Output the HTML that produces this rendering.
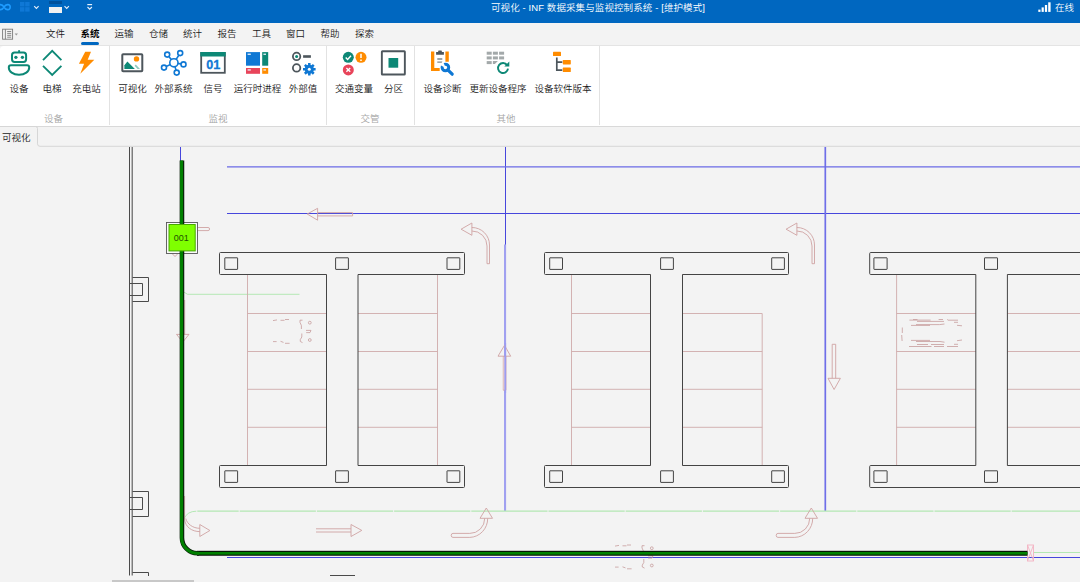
<!DOCTYPE html>
<html lang="zh-CN">
<head>
<meta charset="utf-8">
<title>可视化 - INF 数据采集与监视控制系统</title>
<style>
html,body{margin:0;padding:0;}
body{width:1080px;height:582px;overflow:hidden;background:#f3f3f3;position:relative;
 font-family:"Liberation Sans","Noto Sans CJK SC",sans-serif;font-size:9.5px;color:#222;font-weight:350;}
.abs{position:absolute;}
#title{left:0;top:0;width:1080px;height:23px;background:#0067c0;color:#fff;}
#title .t{letter-spacing:0.1px;position:absolute;left:0;width:1196px;text-align:center;top:1px;line-height:13px;font-size:9.5px;white-space:nowrap;}
#online{position:absolute;left:1055px;top:1px;line-height:13px;font-size:9.5px;color:#fff;}
#menu{left:0;top:23px;width:1080px;height:22px;background:#f3f3f3;}
.mi{position:absolute;top:27.4px;width:40px;margin-left:-20px;text-align:center;line-height:14px;font-size:9.5px;color:#1a1a1a;white-space:nowrap;}
.mi.on{font-weight:bold;color:#000;}
#ul{left:81px;top:42.2px;width:18px;height:2.8px;border-radius:1.5px;background:#0067c0;}
#ribbon{left:0;top:46px;width:1080px;height:80px;background:#fff;border-top-left-radius:4px;}
#ribtop{left:0;top:45px;width:1080px;height:1px;background:#e4e4e4;}
#ribbot{left:0;top:125.5px;width:1080px;height:1px;background:#d9d9d9;}
.sep{position:absolute;top:46px;width:1px;height:79px;background:#e2e2e2;}
.lb{position:absolute;top:82px;width:80px;margin-left:-40px;text-align:center;line-height:14px;font-size:9.5px;color:#1a1a1a;white-space:nowrap;}
.gl{position:absolute;top:112px;width:60px;margin-left:-30px;text-align:center;line-height:14px;font-size:9.5px;color:#a6a6a6;white-space:nowrap;}
#tabtxt{left:2px;top:130.5px;line-height:14px;font-size:9.5px;color:#1a1a1a;white-space:nowrap;}
svg{position:absolute;left:0;top:0;}
</style>
</head>
<body>
<div id="title" class="abs"><div class="t">可视化 - INF 数据采集与监视控制系统 - [维护模式]</div><div id="online">在线</div></div>
<div id="menu" class="abs"></div>
<div class="mi on" style="left:90px">系统</div>
<div class="mi" style="left:55.5px">文件</div>
<div class="mi" style="left:124px">运输</div>
<div class="mi" style="left:158.5px">仓储</div>
<div class="mi" style="left:192.5px">统计</div>
<div class="mi" style="left:227px">报告</div>
<div class="mi" style="left:261.5px">工具</div>
<div class="mi" style="left:295.5px">窗口</div>
<div class="mi" style="left:330px">帮助</div>
<div class="mi" style="left:364.5px">探索</div>
<div id="ribtop" class="abs"></div>
<div id="ribbon" class="abs"></div>
<div id="ribbot" class="abs"></div>
<div id="ul" class="abs"></div>
<div class="sep" style="left:109px"></div>
<div class="sep" style="left:326px"></div>
<div class="sep" style="left:414px"></div>
<div class="sep" style="left:599px"></div>

<div class="lb" style="left:19px">设备</div>
<div class="lb" style="left:52px">电梯</div>
<div class="lb" style="left:86.5px">充电站</div>
<div class="lb" style="left:132.5px">可视化</div>
<div class="lb" style="left:173.5px">外部系统</div>
<div class="lb" style="left:213px">信号</div>
<div class="lb" style="left:257.5px">运行时进程</div>
<div class="lb" style="left:303px">外部值</div>
<div class="lb" style="left:354px">交通变量</div>
<div class="lb" style="left:393.5px">分区</div>
<div class="lb" style="left:442.5px">设备诊断</div>
<div class="lb" style="left:498px">更新设备程序</div>
<div class="lb" style="left:563px">设备软件版本</div>

<div class="gl" style="left:53.5px">设备</div>
<div class="gl" style="left:218px">监视</div>
<div class="gl" style="left:370px">交管</div>
<div class="gl" style="left:506px">其他</div>

<div id="tabtxt" class="abs">可视化</div>

<svg id="icons" width="1080" height="130" viewBox="0 0 1080 130">
<!-- title bar -->
<path d="M4 7.1c1.6-2.9 6.2-3.8 6.2 0s-4.6 2.9-6.2 0s-6.2-3.8-6.2 0s4.6 2.9 6.2 0z" fill="none" stroke="#1e9cff" stroke-width="1.6"/>
<g fill="#0f78d6"><rect x="20" y="2" width="4.4" height="4.4"/><rect x="25.2" y="2" width="4.4" height="4.4"/><rect x="20" y="7.2" width="4.4" height="4.4"/><rect x="25.2" y="7.2" width="4.4" height="4.4"/></g>
<g fill="none" stroke="#e4effa" stroke-width="1.15"><path d="M34.2 6.2l2.2 2.2l2.2-2.2"/><path d="M64.5 6.2l2.2 2.2l2.2-2.2"/><path d="M87.5 7l2.2 2.2l2.2-2.2"/><path d="M87.3 4.6h4.8" stroke-width="1.2"/></g>
<rect x="49" y="1" width="13" height="3" fill="#00519c"/>
<rect x="49" y="7" width="13" height="6" fill="#f1f1f1"/>
<g fill="#fff"><rect x="1038.3" y="9.6" width="2.2" height="2.3"/><rect x="1041.6" y="7.4" width="2.2" height="4.5"/><rect x="1044.9" y="5" width="2.2" height="6.9"/><rect x="1048.2" y="2.3" width="2.4" height="9.6"/></g>
<!-- menu sidebar icon -->
<g fill="none" stroke="#7a7a7a" stroke-width="0.9"><rect x="2.6" y="29.2" width="10" height="10"/><path d="M5.4 29.2v10M7.2 31.5h4M7.2 33.4h4M7.2 35.3h4M7.2 37.2h4"/></g>
<path d="M14.6 33.6l1.7 1.8l1.7-1.8z" fill="#9a9a9a"/>
<!-- robot -->
<g fill="none" stroke="#0d8876" stroke-width="2" stroke-linejoin="round"><rect x="12" y="52.6" width="14.1" height="9.3" rx="2.6"/><path d="M19.1 50.2v2.4" stroke-width="1.9"/><path d="M11 65.2H27Q29.2 65.2 29.2 67.4C29.2 71.5 25 74.7 19 74.7S8.8 71.5 8.8 67.4Q8.8 65.2 11 65.2Z"/></g>
<circle cx="15.9" cy="57.3" r="1.65" fill="#0d8876"/><circle cx="22.4" cy="57.3" r="1.65" fill="#0d8876"/>
<!-- elevator -->
<g fill="none" stroke="#0d8876" stroke-width="1.85"><path d="M43 60.1l9.2-9.3l9.2 9.3"/><path d="M43 65.8l9.2 9.2l9.2-9.2"/></g>
<!-- lightning -->
<path d="M85.2 51.8h5.8l-3.3 7.9h6.6l-14 14l3.8-10h-5.2z" fill="#ff8c00"/>
<!-- image -->
<rect x="122.3" y="54.3" width="20" height="17" rx="0.8" fill="#fff" stroke="#4d565c" stroke-width="2"/>
<circle cx="136.5" cy="58.9" r="2.7" fill="#ff8c00"/>
<path d="M124.4 69v-3.8l3-3.6l7.5 7.4z" fill="#0d8876"/><path d="M134.6 65.7l1.2-1.1l4.2 4.4h-2.5z" fill="#8fcabf"/>
<!-- network -->
<g fill="#fff" stroke="#0f78d4" stroke-width="1.6"><path d="M173.9 62.8L167.2 54.6M173.9 62.8L180.2 53.1M173.9 62.8L183.5 64.4M173.9 62.8L176.7 72.6M173.9 62.8L164 67.6"/><circle cx="173.9" cy="62.8" r="4.1"/><circle cx="167.2" cy="54.6" r="2.5"/><circle cx="180.2" cy="53.1" r="2.5"/><circle cx="183.5" cy="64.4" r="2.5"/><circle cx="176.7" cy="72.6" r="2.5"/><circle cx="164" cy="67.6" r="2.5"/></g>
<!-- 01 -->
<rect x="201.2" y="53" width="23.6" height="19.8" fill="#fff" stroke="#4d565c" stroke-width="1.8"/>
<rect x="200.3" y="52" width="25.4" height="4.5" fill="#0d8876"/>
<text x="213.3" y="69.1" text-anchor="middle" style="font:bold 12.6px 'Liberation Sans',sans-serif" fill="#0f78d4" stroke="#0f78d4" stroke-width="0.3">01</text>
<!-- tiles -->
<rect x="246" y="52.1" width="14" height="13.6" fill="#0f78d4"/><rect x="262.2" y="52.1" width="6" height="13.6" fill="#0d8876"/>
<rect x="246" y="68" width="14" height="5.8" fill="#e8445a"/><rect x="262.2" y="68" width="6" height="5.8" fill="#ff8c00"/>
<g fill="#e8f1fb"><rect x="247.6" y="53.6" width="3.2" height="1.3"/><rect x="263.4" y="53.6" width="2.6" height="1.3"/><rect x="247.6" y="69.3" width="3.2" height="1.3"/><rect x="263.4" y="69.3" width="2.6" height="1.3"/></g>
<!-- options gear -->
<g fill="#fff" stroke="#4d565c" stroke-width="1.8"><circle cx="296.6" cy="56.4" r="3.7"/><circle cx="296.6" cy="67.9" r="3.7"/></g>
<circle cx="296.6" cy="56.4" r="1.5" fill="#0d8876"/>
<rect x="303.1" y="55.2" width="7.8" height="2.6" fill="#4d565c"/>
<g fill="#0f78d4"><circle cx="309.3" cy="69.3" r="4.6"/><g stroke="#0f78d4" stroke-width="2.5"><path d="M309.3 63v12.6M303 69.3h12.6M304.85 64.85l8.9 8.9M313.75 64.85l-8.9 8.9"/></g></g>
<circle cx="309.3" cy="69.3" r="1.5" fill="#fff"/>
<!-- traffic vars -->
<circle cx="348.3" cy="57.3" r="5.5" fill="#0d8876"/><path d="M345.7 57.5l1.9 1.9l3.4-3.6" fill="none" stroke="#fff" stroke-width="1.4"/>
<circle cx="361" cy="57.3" r="5.5" fill="#ff8c00"/><path d="M361 53.8v4.3M361 59.5v1.5" stroke="#fff" stroke-width="1.5"/>
<circle cx="348.3" cy="69.9" r="5.5" fill="#e8445a"/><path d="M346.4 68l3.8 3.8M350.2 68l-3.8 3.8" stroke="#fff" stroke-width="1.4"/>
<!-- zone -->
<rect x="381.85" y="51.25" width="23" height="23.3" rx="0.6" fill="#fff" stroke="#4d565c" stroke-width="1.9"/><rect x="388.5" y="58" width="9.7" height="9.7" fill="#0d8876"/>
<!-- diagnosis -->
<path d="M431 51.6h3.3v16.3h5.4v3h-8.7zM445.4 51.6h3.4v10.2h-3.4z" fill="#ff8c00"/>
<path d="M436.1 54.7v-2.6h1.9l.500000-1.7h3l.500000 1.7h1.9v2.6z" fill="#4d565c"/>
<path d="M437.3 59h5M437.3 62.1h5" stroke="#7d868b" stroke-width="1.4"/>
<circle cx="445.4" cy="67.5" r="3.3" fill="none" stroke="#0f78d4" stroke-width="3"/>
<path d="M447.8 69.9l4.4 4.3" stroke="#0f78d4" stroke-width="3.2" stroke-linecap="round"/>
<path d="M445.8 67.9L439.6 64.8L443 61.4z" fill="#fff"/>
<!-- update -->
<g fill="#a3a9aa"><rect x="486.7" y="51.7" width="5" height="3"/><rect x="492.9" y="51.7" width="5" height="3"/><rect x="499.1" y="51.7" width="5" height="3"/><rect x="486.7" y="56.4" width="5" height="3"/><rect x="492.9" y="56.4" width="5" height="3"/><rect x="499.1" y="56.4" width="5" height="3"/><rect x="486.7" y="61.1" width="5" height="3"/><path d="M492.9 61.1h5l-3 3h-2z"/></g>
<path d="M507.1 65.1a5 5 0 1 0 .900000 3.6" fill="none" stroke="#0d8876" stroke-width="1.9"/><path d="M509.3 61.4v5h-5z" fill="#0d8876"/>
<!-- version -->
<g fill="#ff8c00"><rect x="553" y="51.7" width="8" height="4.4" rx=".6"/><rect x="562.8" y="60" width="8" height="4.4" rx=".6"/><rect x="562.8" y="67.6" width="8" height="4.4" rx=".6"/></g>
<path d="M556.8 57.6v12.6h5.5M556.8 62.2h5.5" fill="none" stroke="#4d565c" stroke-width="1.7"/>
</svg>
<svg id="cv" width="1080" height="582" viewBox="0 0 1080 582">
<path d="M0 126.5H35.5Q37.5 126.5 37.5 128.5V143.8Q37.5 146.3 40 146.3H1080" fill="none" stroke="#d6d6d6" stroke-width="1"/>
<g fill="none" stroke-width="1">
<g stroke="#4a4a4a"><path d="M129.5 147V575.5"/><path d="M132.2 147V575.5" stroke="#5a5a5a" stroke-width="1.15"/>
<path d="M132.5 277.5H148.5V301.5H132.5M129.5 283.5H142.5V295.5H129.5"/>
<path d="M132.5 491.5H148.5V516.5H132.5M129.5 497.5H142.5V509.5H129.5"/>
<path d="M132.5 572.5H148.5V576M330 575.5H355"/></g>
<g stroke="#4646dc"><path d="M180.5 147V162M227 213.5H1080M227 557.5H1080M505.5 147V245"/>
<path d="M825.3 147V511" stroke="#6e6ee8" stroke-width="1.7"/>
<path d="M227 166.8H1080" stroke="#6a6ae6" stroke-width="1.35"/>
<path d="M505.05 244.5V511" stroke="#a0a0f0" stroke-width="2.1"/></g>
<g stroke="#b4e8b4"><path d="M183.5 291.8L187.5 294.3H299.5"/>
<path d="M184 518.6Q187.5 511.2 196.3 511.2" /><path d="M197.3 511.2H1080" stroke-width="1.3" stroke-dasharray="76.2 1" stroke-dashoffset="34.8"/>
<path d="M1033.5 552.5H1080"/></g>
</g>
<path fill="none" stroke="#cfaaaa" stroke-width="0.9" d="M247.5 274.5V465.5M437.5 274.5V465.5M247.5 274.5H326.5M358 274.5H437.5M247.5 313.5H326.5M358 313.5H437.5M247.5 351.5H326.5M358 351.5H437.5M247.5 389.3H326.5M358 389.3H437.5M247.5 427.3H326.5M358 427.3H437.5M247.5 465.5H326.5M358 465.5H437.5"/>
<g fill="none" stroke="#444" stroke-width="1"><path d="M219.5 253.5Q219.5 252.5 220.5 252.5H463.5Q464.5 252.5 464.5 253.5V273.5Q464.5 274.5 463.5 274.5H358V465.5H463.5Q464.5 465.5 464.5 466.5V486.5Q464.5 487.5 463.5 487.5H220.5Q219.5 487.5 219.5 486.5V466.5Q219.5 465.5 220.5 465.5H326.5V274.5H220.5Q219.5 274.5 219.5 273.5Z"/>
<rect x="224.8" y="257.8" width="12.8" height="11.6" rx="0.3"/>
<rect x="224.8" y="470.8" width="12.8" height="11.6" rx="0.3"/>
<rect x="335.6" y="257.8" width="12.8" height="11.6" rx="0.3"/>
<rect x="335.6" y="470.8" width="12.8" height="11.6" rx="0.3"/>
<rect x="447" y="257.8" width="12.8" height="11.6" rx="0.3"/>
<rect x="447" y="470.8" width="12.8" height="11.6" rx="0.3"/>
</g>
<path fill="none" stroke="#cfaaaa" stroke-width="0.9" d="M571.5 274.5V465.5M762.2 313.5V465.5M571.5 274.5H650.5M682.5 274.5H762.2M571.5 313.5H650.5M682.5 313.5H762.2M571.5 351.5H650.5M682.5 351.5H762.2M571.5 389.3H650.5M682.5 389.3H762.2M571.5 427.3H650.5M682.5 427.3H762.2M571.5 465.5H650.5M682.5 465.5H762.2"/>
<g fill="none" stroke="#444" stroke-width="1"><path d="M544.5 253.5Q544.5 252.5 545.5 252.5H787.5Q788.5 252.5 788.5 253.5V273.5Q788.5 274.5 787.5 274.5H682.5V465.5H787.5Q788.5 465.5 788.5 466.5V486.5Q788.5 487.5 787.5 487.5H545.5Q544.5 487.5 544.5 486.5V466.5Q544.5 465.5 545.5 465.5H650.5V274.5H545.5Q544.5 274.5 544.5 273.5Z"/>
<rect x="549.7" y="257.8" width="12.8" height="11.6" rx="0.3"/>
<rect x="549.7" y="470.8" width="12.8" height="11.6" rx="0.3"/>
<rect x="660.6" y="257.8" width="12.8" height="11.6" rx="0.3"/>
<rect x="660.6" y="470.8" width="12.8" height="11.6" rx="0.3"/>
<rect x="771.7" y="257.8" width="12.7" height="11.6" rx="0.3"/>
<rect x="771.7" y="470.8" width="12.7" height="11.6" rx="0.3"/>
</g>
<path fill="none" stroke="#cfaaaa" stroke-width="0.9" d="M896.6 274.5V465.5M1087 274.5V465.5M896.6 274.5H975.8M1007.4 274.5H1087M896.6 313.5H975.8M1007.4 313.5H1087M896.6 351.5H975.8M1007.4 351.5H1087M896.6 389.3H975.8M1007.4 389.3H1087M896.6 427.3H975.8M1007.4 427.3H1087M896.6 465.5H975.8M1007.4 465.5H1087"/>
<g fill="none" stroke="#444" stroke-width="1"><path d="M869.7 253.5Q869.7 252.5 870.7 252.5H1113Q1114 252.5 1114 253.5V273.5Q1114 274.5 1113 274.5H1007.4V465.5H1113Q1114 465.5 1114 466.5V486.5Q1114 487.5 1113 487.5H870.7Q869.7 487.5 869.7 486.5V466.5Q869.7 465.5 870.7 465.5H975.8V274.5H870.7Q869.7 274.5 869.7 273.5Z"/>
<rect x="873.9" y="257.8" width="13.2" height="11.6" rx="0.3"/>
<rect x="873.9" y="470.8" width="13.2" height="11.6" rx="0.3"/>
<rect x="984.5" y="257.8" width="13" height="11.6" rx="0.3"/>
<rect x="984.5" y="470.8" width="13" height="11.6" rx="0.3"/>
<rect x="1096" y="257.8" width="13" height="11.6" rx="0.3"/>
<rect x="1096" y="470.8" width="13" height="11.6" rx="0.3"/>
</g>
<g fill="none" stroke="#cfa3a3" stroke-width="0.9" stroke-linejoin="round">
<path d="M317.6 212.6H352.6V215.9H317.6M317.6 208.3L307.2 214L317.6 220.2Z"/>
<g transform="translate(0,0)"><path d="M471.9 223L461.1 229.2L471.9 235.3ZM471.9 227.5A17.5 17.5 0 0 1 489.5 245V263.7H487V246A15 15 0 0 0 471.9 231"/><path d="M480 518.3L486.3 508L492.5 518.3ZM484.7 518.4A14.9 14.9 0 0 1 469.8 533.4H453Q451.2 533.4 451.2 535.4Q451.2 537.4 453 537.4H469.8A18.4 19 0 0 0 487.7 518.4"/></g>
<g transform="translate(325,0)"><path d="M471.9 223L461.1 229.2L471.9 235.3ZM471.9 227.5A17.5 17.5 0 0 1 489.5 245V263.7H487V246A15 15 0 0 0 471.9 231"/><path d="M480 518.3L486.3 508L492.5 518.3ZM484.7 518.4A14.9 14.9 0 0 1 469.8 533.4H453Q451.2 533.4 451.2 535.4Q451.2 537.4 453 537.4H469.8A18.4 19 0 0 0 487.7 518.4"/></g>
<path d="M197.5 227.5H208Q209.6 227.5 209.6 229Q209.6 230.6 208 230.6H197.5"/>
<path d="M172 253.5L175 256.5L178 253.5"/>
<path d="M184.7 300V334.4M176.5 334.4H189L182.8 342Z"/>
<path d="M184.6 496V519C185 527 192 531.6 199.8 531.6M185.8 518.5C187 524 193 528.3 199.8 528.3M199.8 524.5L209.9 530.5L199.8 536.5Z"/>
<path d="M351 528.8H316M316 532H351M351 524.5L361.8 530.4L351 536.5Z"/>
<path d="M498 356.2H510.7L504.5 345.3ZM503.3 356.2V390.2H505.9V356.2"/><path d="M504.1 357V389.8" stroke="#ecd4d4" stroke-width="1.2"/>
<path d="M832.2 378.3V344.3H835.7V378.3M828 378.3H840.4L834.1 389.5Z"/>
</g>
<path d="M505.3 343V393" stroke="#9c9cf0" stroke-width="1.6" fill="none"/>
<g fill="none" stroke="#c79c9c" stroke-width="0.8"><path d="M273 320.6L277 319.9M280.5 320.3H284.5M285 319.5H289M273 341.6H276.6M280.5 341.3L283.5 342.4M285 343.3H289.6M302.5 320.2H300Q299.3 322 301.4 325.5V329M301.8 333.5V337Q299.5 340 300.3 341.5L302.5 342.6M306 330.4H311L310 332.6H306.2"/><circle cx="309.8" cy="322.7" r="1.4"/><circle cx="309.8" cy="340" r="1.4"/><g transform="translate(342,225.5)"><path d="M273 320.6L277 319.9M280.5 320.3H284.5M285 319.5H289M273 341.6H276.6M280.5 341.3L283.5 342.4M285 343.3H289.6M302.5 320.2H300Q299.3 322 301.4 325.5V329M301.8 333.5V337Q299.5 340 300.3 341.5L302.5 342.6M306 330.4H311L310 332.6H306.2"/><circle cx="309.8" cy="322.7" r="1.4"/><circle cx="309.8" cy="340" r="1.4"/></g>
<path d="M909.4 320.1H930.6M913 319.5H917.5M917 321.4H944M938.6 319.5H943M947.2 319.4L948 320.2H958M954 322.3H958M957 325.3L962 325.8M916 324.6H939.6L944.5 324M911 325.4H930M902.3 327.5V333M901.7 335L902.1 341M911 340.4H930M916 341.5H940L944.5 342.2M917 344.5H928M931 344.5H944M909 346.5H931.5M934 346.5H944M947 346.5H958M954 344.3H958M957 340.7L962 340"/>
</g>
<g fill="none" stroke="#f3b4c4" stroke-width="0.9"><rect x="1027.5" y="545" width="6" height="16"/><path d="M1027.5 545L1033.5 561M1033.5 545L1027.5 561"/></g>
<rect x="166.5" y="222.5" width="31" height="31" fill="#fafafa" stroke="#555" stroke-width="0.9"/>
<path d="M181.95 160.5V537.7A15.5 15.5 0 0 0 197.45 553.2H199" fill="none" stroke="#0a1e0a" stroke-width="4.6"/>
<rect x="197" y="550.8" width="830.5" height="4.95" fill="#050f05"/>
<path d="M181.55 160.5V537.55A15.75 15.75 0 0 0 197.3 553.3H199" fill="none" stroke="#008000" stroke-width="3.05"/>
<rect x="197" y="551.95" width="830.5" height="2.7" fill="#008000"/>
<rect x="169" y="224.5" width="26.2" height="26.4" fill="#7fff00" stroke="#48a800" stroke-width="1"/>
<text x="181.2" y="240.8" text-anchor="middle" font-family="Liberation Sans,sans-serif" font-size="9" fill="#234f00">001</text>
<rect x="112" y="580" width="82" height="2" fill="#c8c8c8"/>
</svg>
</body>
</html>
